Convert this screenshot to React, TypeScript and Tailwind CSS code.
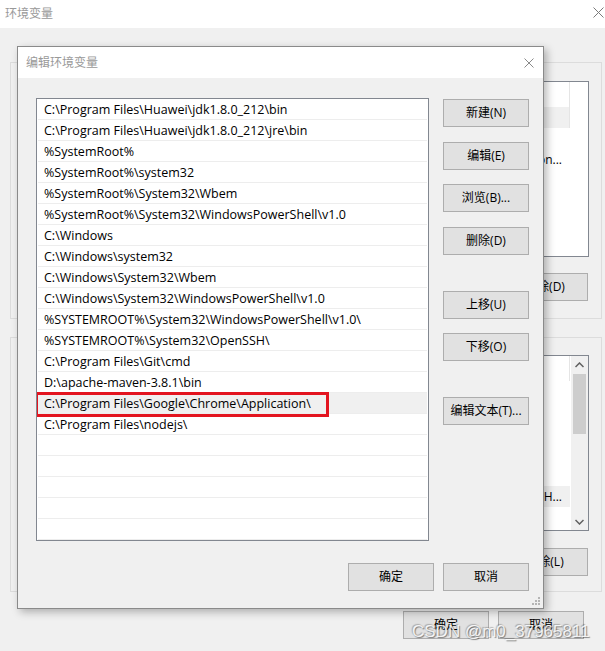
import React from "react";

const paths = [
  "C:\\Program Files\\Huawei\\jdk1.8.0_212\\bin",
  "C:\\Program Files\\Huawei\\jdk1.8.0_212\\jre\\bin",
  "%SystemRoot%",
  "%SystemRoot%\\system32",
  "%SystemRoot%\\System32\\Wbem",
  "%SystemRoot%\\System32\\WindowsPowerShell\\v1.0",
  "C:\\Windows",
  "C:\\Windows\\system32",
  "C:\\Windows\\System32\\Wbem",
  "C:\\Windows\\System32\\WindowsPowerShell\\v1.0",
  "%SYSTEMROOT%\\System32\\WindowsPowerShell\\v1.0\\",
  "%SYSTEMROOT%\\System32\\OpenSSH\\",
  "C:\\Program Files\\Git\\cmd",
  "D:\\apache-maven-3.8.1\\bin",
  "C:\\Program Files\\Google\\Chrome\\Application\\",
  "C:\\Program Files\\nodejs\\",
];

function CloseX({ size, color }: { size: number; color: string }) {
  return (
    <svg width={size} height={size} viewBox={`0 0 ${size} ${size}`}>
      <line x1="0.5" y1="0.5" x2={size - 0.5} y2={size - 0.5} stroke={color} strokeWidth="1" />
      <line x1={size - 0.5} y1="0.5" x2="0.5" y2={size - 0.5} stroke={color} strokeWidth="1" />
    </svg>
  );
}

function Btn({ label, className = "" }: { label: string; className?: string }) {
  return (
    <div
      className={`w-[86px] h-[28px] shrink-0 flex items-center justify-center bg-[#e1e1e1] border border-[#adadad] text-[12px] text-black whitespace-nowrap ${className}`}
    >
      {label}
    </div>
  );
}

function Chevron({ up }: { up: boolean }) {
  return (
    <svg width="9" height="6" viewBox="0 0 9 6">
      {up ? (
        <polyline points="0.5,5 4.5,1 8.5,5" fill="none" stroke="#606060" strokeWidth="1.5" />
      ) : (
        <polyline points="0.5,1 4.5,5 8.5,1" fill="none" stroke="#606060" strokeWidth="1.5" />
      )}
    </svg>
  );
}

function BgList1() {
  return (
    <div className="ml-[20px] self-stretch h-[176px] border border-[#828790] bg-white flex flex-col">
      <div className="flex h-[25px]">
        <div className="flex-1 border-r border-[#e5e5e5]" />
        <div className="w-[18px]" />
      </div>
      <div className="flex h-[21px]">
        <div className="flex-1 bg-[#f0f0f0] border-r border-[#e5e5e5]" />
        <div className="w-[18px]" />
      </div>
      <div className="h-[21px]" />
      <div className="flex h-[21px]">
        <div className="flex-1 flex items-center justify-end pr-[8px] whitespace-nowrap overflow-hidden">
          %USERPROFILE%\AppData\Local\Temp;C:\Program Files\Applicati on...
        </div>
        <div className="w-[18px]" />
      </div>
    </div>
  );
}

function BgList2() {
  return (
    <div className="ml-[20px] self-stretch h-[176px] border border-[#828790] bg-white flex">
      <div className="flex-1 flex flex-col pr-[1px]">
        <div className="h-[25px] border-r border-[#e5e5e5]" />
        <div className="h-[21px]" />
        <div className="h-[21px]" />
        <div className="h-[21px]" />
        <div className="h-[21px]" />
        <div className="h-[21px]" />
        <div className="h-[21px] bg-[#f0f0f0] flex items-center justify-end pr-[8px] whitespace-nowrap overflow-hidden">
          C:\Windows\System32;C:\Windows;%SystemRoot%\System32\...H...
        </div>
      </div>
      <div className="w-[17px] bg-[#f0f0f0] flex flex-col">
        <div className="h-[17px] flex items-center justify-center">
          <Chevron up />
        </div>
        <div className="mt-[1px] h-[60px] mx-[2px] bg-[#cdcdcd]" />
        <div className="flex-1" />
        <div className="h-[17px] flex items-center justify-center">
          <Chevron up={false} />
        </div>
      </div>
    </div>
  );
}

export default function App() {
  return (
    <div className="relative w-[605px] h-[651px] overflow-hidden bg-[#f0f0f0] [font-family:'Open_Sans','Noto_Sans_CJK_SC',sans-serif] text-[12px] text-black">
      {/* Background window: 环境变量 */}
      <div className="flex flex-col h-full">
        <div className="h-[28px] shrink-0 bg-white flex justify-between pl-[5px]">
          <span className="mt-[5px] text-[12px] text-[#999]">环境变量</span>
          <div className="mt-[7px] mr-[1px]">
            <CloseX size={11} color="#7a7a7a" />
          </div>
        </div>
        <div className="flex flex-col pl-[10px] pr-[3px] pt-[34px]">
          <div className="border border-[#dcdcdc] flex flex-col items-end pt-[18px] pb-[17px] pr-[12px]">
            <BgList1 />
            <Btn label="删除(D)" className="mt-[16px] mr-[1px]" />
          </div>
          <div className="mt-[18px] border border-[#dcdcdc] flex flex-col items-end pt-[17px] pb-[15px] pr-[12px]">
            <BgList2 />
            <Btn label="删除(L)" className="mt-[17px] mr-[1px]" />
          </div>
          <div className="mt-[19px] flex justify-end gap-[9px] pr-[18px]">
            <Btn label="确定" />
            <Btn label="取消" />
          </div>
        </div>
      </div>

      {/* Dialog: 编辑环境变量 */}
      <div className="absolute left-[17px] top-[46px] w-[527px] h-[563px] border border-[#8a8a8a] bg-[#f0f0f0] flex flex-col shadow-[3px_3px_8px_rgba(0,0,0,0.28)]">
        <div className="h-[31px] shrink-0 bg-white flex items-center justify-between pl-[8px] pr-[9px]">
          <span className="text-[12px] text-[#999]">编辑环境变量</span>
          <CloseX size={10} color="#8a8a8a" />
        </div>
        <div className="flex pt-[20px] pl-[18px]">
          <div className="w-[393px] h-[443px] border border-[#828790] bg-white flex flex-col overflow-hidden">
            {Array.from({ length: 21 }).map((_, i) => {
              const text = paths[i];
              const selected = i === 14;
              return (
                <div
                  key={i}
                  className={`relative h-[21px] shrink-0 mx-[1px] border-b border-[#ededed] flex items-center pl-[6px] pt-[2px] text-[12.5px] whitespace-nowrap ${
                    selected ? "bg-[#f0f0f0]" : ""
                  }`}
                >
                  {text ?? ""}
                  {selected && (
                    <div className="absolute left-[-3px] top-[-1px] w-[294px] h-[25px] border-[3px] border-[#e3141f]" />
                  )}
                </div>
              );
            })}
          </div>
          <div className="ml-[14px] flex flex-col">
            <Btn label="新建(N)" className="mt-[1px]" />
            <Btn label="编辑(E)" className="mt-[15px]" />
            <Btn label="浏览(B)..." className="mt-[14px]" />
            <Btn label="删除(D)" className="mt-[15px]" />
            <Btn label="上移(U)" className="mt-[36px]" />
            <Btn label="下移(O)" className="mt-[14px]" />
            <Btn label="编辑文本(T)..." className="mt-[36px]" />
          </div>
        </div>
        <div className="mt-[22px] flex justify-end gap-[9px] pr-[14px]">
          <Btn label="确定" />
          <Btn label="取消" />
        </div>
        <svg className="absolute right-[2px] bottom-[2px]" width="9" height="9" viewBox="0 0 9 9">
          <rect x="6" y="0" width="2" height="2" fill="#b5b5b5" />
          <rect x="3" y="3" width="2" height="2" fill="#b5b5b5" />
          <rect x="6" y="3" width="2" height="2" fill="#b5b5b5" />
          <rect x="0" y="6" width="2" height="2" fill="#b5b5b5" />
          <rect x="3" y="6" width="2" height="2" fill="#b5b5b5" />
          <rect x="6" y="6" width="2" height="2" fill="#b5b5b5" />
        </svg>
      </div>

      {/* Watermark */}
      <div className="absolute left-[412px] top-[622px] [font-family:'Liberation_Sans',sans-serif] text-[17px] leading-[20px] text-white/85 whitespace-nowrap [text-shadow:1px_1px_1px_rgba(0,0,0,0.45),-1px_-1px_1px_rgba(0,0,0,0.25)]">
        CSDN @m0_37965811
      </div>
    </div>
  );
}
